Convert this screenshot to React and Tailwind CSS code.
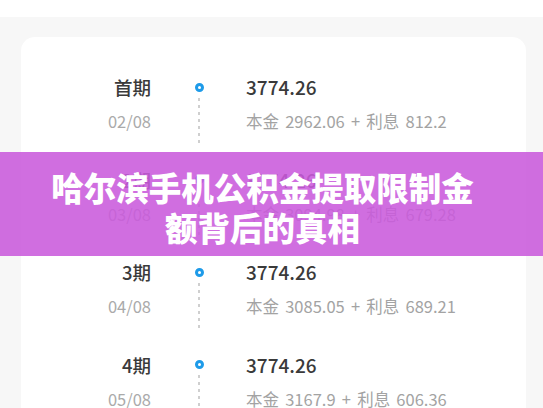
const rows = [
  { label: "首期", date: "02/08", amount: "3774.26", principal: "2962.06", interest: "812.2" },
  { label: "2期", date: "03/08", amount: "3774.26", principal: "3094.98", interest: "679.28" },
  { label: "3期", date: "04/08", amount: "3774.26", principal: "3085.05", interest: "689.21" },
  { label: "4期", date: "05/08", amount: "3774.26", principal: "3167.9", interest: "606.36" },
];

function Row({ row }) {
  return (
    <div className="flex h-[92.5px]">
      {/* Period + date */}
      <div className="w-[130px] text-right">
        <div className="h-[26px] text-[18.5px] leading-[26px] font-medium text-[#3a3a3a]">{row.label}</div>
        <div className="mt-[8px] h-[26px] text-[16.5px] leading-[26px] text-[#aaaaaa]">{row.date}</div>
      </div>
      {/* Timeline */}
      <div className="ml-[36px] flex w-[24px] flex-col items-center">
        <div className="mt-[8.5px] h-[9px] w-[9px] rounded-full border-[3px] border-[#1e9be9] bg-white" />
        <div className="mt-[6px] h-[48px] w-[2px] bg-[repeating-linear-gradient(to_bottom,#cfcfcf_0_3px,transparent_3px_7px)]" />
      </div>
      {/* Amount */}
      <div className="ml-[35px]">
        <div className="h-[26px] text-[19px] leading-[26px] font-medium text-[#3a3a3a]">{row.amount}</div>
        <div className="mt-[8px] h-[26px] text-[16.5px] leading-[26px] text-[#a3a3a3] [word-spacing:2.5px]">
          本金 {row.principal} + 利息 {row.interest}
        </div>
      </div>
    </div>
  );
}

export default function App() {
  return (
    <div className="relative h-[408px] w-[543px] overflow-hidden bg-white font-['Noto_Sans_CJK_SC',sans-serif]">
      <div className="mt-[17px] h-full bg-[#f7f7f7] px-[21px] pt-[20px]">
        <div className="h-full w-[505px] rounded-t-[14px] bg-white pt-[37px]">
          {rows.map((row) => (
            <Row key={row.date} row={row} />
          ))}
        </div>
      </div>

      {/* Title banner */}
      <div className="absolute left-0 top-[152px] flex h-[104px] w-full items-center justify-center bg-[rgba(202,90,220,0.88)] pl-[40px] pr-[58px] pt-[6px]">
        <h1 className="text-center text-[32.5px] font-black leading-[40px] text-white">
          哈尔滨手机公积金提取限制金额背后的真相
        </h1>
      </div>
    </div>
  );
}
